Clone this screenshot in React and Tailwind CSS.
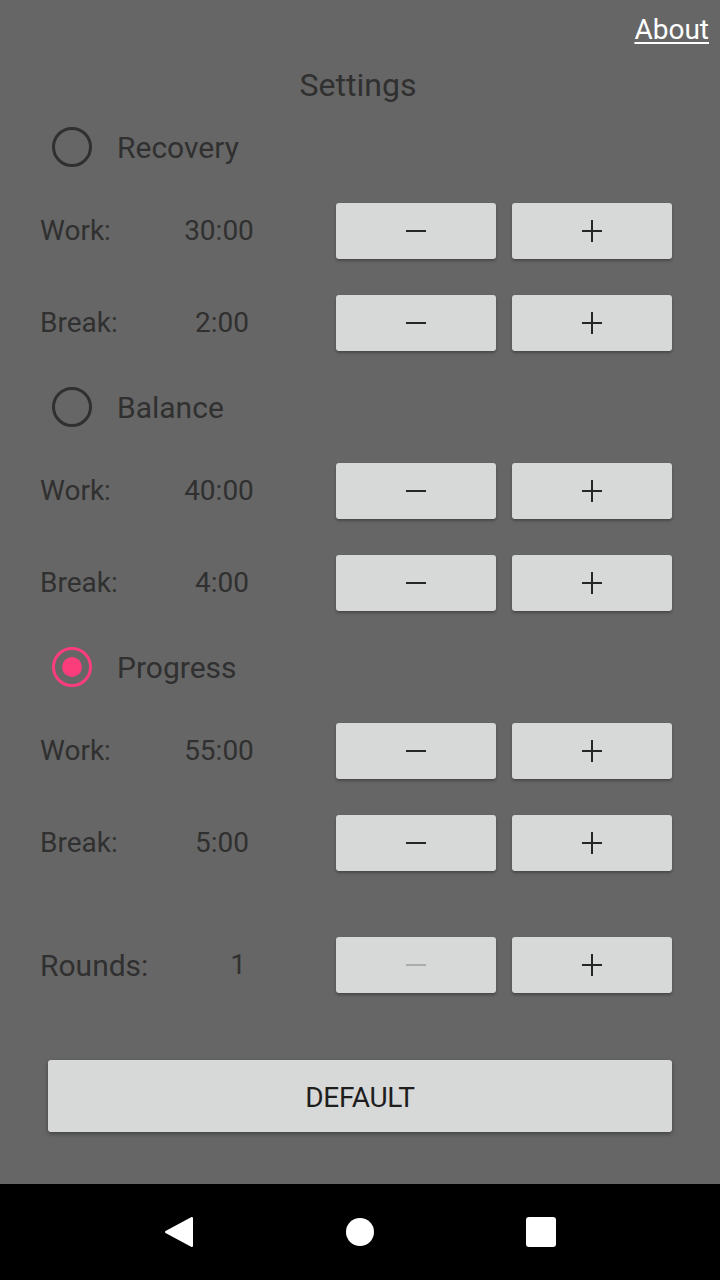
import React, { useState } from "react";

const modes = [
  { name: "Recovery", work: "30:00", brk: "2:00" },
  { name: "Balance", work: "40:00", brk: "4:00" },
  { name: "Progress", work: "55:00", brk: "5:00" }
];

const Minus = ({ disabled }) => (
  <svg width="20" height="20" viewBox="0 0 20 20">
    <path d="M0 10h20" stroke={disabled ? "#ababab" : "#262626"} strokeWidth="2" />
  </svg>
);

const Plus = () => (
  <svg width="20" height="22" viewBox="0 0 20 22">
    <path d="M0 11h20M10 0v22" stroke="#262626" strokeWidth="2" />
  </svg>
);

const StepButton = ({ children }) => (
  <button className="w-[160px] h-[56px] bg-[#d7d8d8] rounded-[3px] shadow-[0_2px_3px_rgba(0,0,0,0.3)] flex items-center justify-center">
    {children}
  </button>
);

const StepRow = ({ label, value, labelClass = "", valueClass = "ml-[183px]", minusDisabled, className = "h-[92px]" }) => (
  <div className={`flex items-center ${className}`}>
    <div className="relative w-[296px] flex items-center">
      <span className={`absolute left-[40px] ${labelClass}`}>{label}</span>
      <span className={`w-[72px] text-center ${valueClass}`}>{value}</span>
    </div>
    <div className="flex gap-[16px] ml-[40px]">
      <StepButton>
        <Minus disabled={minusDisabled} />
      </StepButton>
      <StepButton>
        <Plus />
      </StepButton>
    </div>
  </div>
);

const Radio = ({ checked, label, onClick }) => (
  <div className="h-[76px] flex items-center cursor-pointer" onClick={onClick}>
    <div
      className={`ml-[52px] w-[40px] h-[40px] rounded-full border-[3px] flex items-center justify-center ${
        checked ? "border-[#fb3d7c]" : "border-[#303030]"
      }`}
    >
      {checked && <div className="w-[20px] h-[20px] rounded-full bg-[#fb3d7c]" />}
    </div>
    <span className="ml-[25px] text-[30px]">{label}</span>
  </div>
);

export default function App() {
  const [selected, setSelected] = useState(2);

  return (
    <div className="w-[720px] h-[1280px] flex flex-col bg-[#666666] text-[#303030] text-[28px] font-['Roboto',sans-serif]">
      {/* Header */}
      <div className="h-[60px] flex items-center justify-end pr-[11px]">
        <a href="#" className="text-white underline underline-offset-[3px] decoration-[2px]">About</a>
      </div>
      <div className="h-[49px] flex items-center justify-center pr-[4px] text-[32px]">Settings</div>

      {/* Modes */}
      {modes.map((m, i) => (
        <div key={m.name}>
          <Radio checked={selected === i} label={m.name} onClick={() => setSelected(i)} />
          <StepRow label="Work:" value={m.work} />
          <StepRow label="Break:" value={m.brk} valueClass="ml-[186px]" />
        </div>
      ))}

      {/* Rounds */}
      <StepRow
        label="Rounds:"
        labelClass="text-[30px]"
        value="1"
        valueClass="ml-[202px]"
        minusDisabled
        className="h-[92px] mt-[30px]"
      />

      {/* Default button */}
      <button className="mt-[49px] mx-[48px] h-[72px] pt-[4px] bg-[#d7d8d8] rounded-[3px] shadow-[0_2px_4px_rgba(0,0,0,0.35)] text-[#1e1e1e] text-[28px] font-normal tracking-[-0.3px]">
        DEFAULT
      </button>

      <div className="flex-1" />

      {/* Android nav bar */}
      <div className="h-[96px] bg-black flex items-center justify-center">
        <div className="flex items-center w-[392px] justify-between">
          <svg width="30" height="32" viewBox="0 0 30 32">
            <path d="M28 2 L28 30 L2 16 Z" fill="#fff" stroke="#fff" strokeWidth="2" strokeLinejoin="round" />
          </svg>
          <div className="w-[28px] h-[28px] rounded-full bg-white" />
          <div className="w-[30px] h-[30px] rounded-[3px] bg-white" />
        </div>
      </div>
    </div>
  );
}
